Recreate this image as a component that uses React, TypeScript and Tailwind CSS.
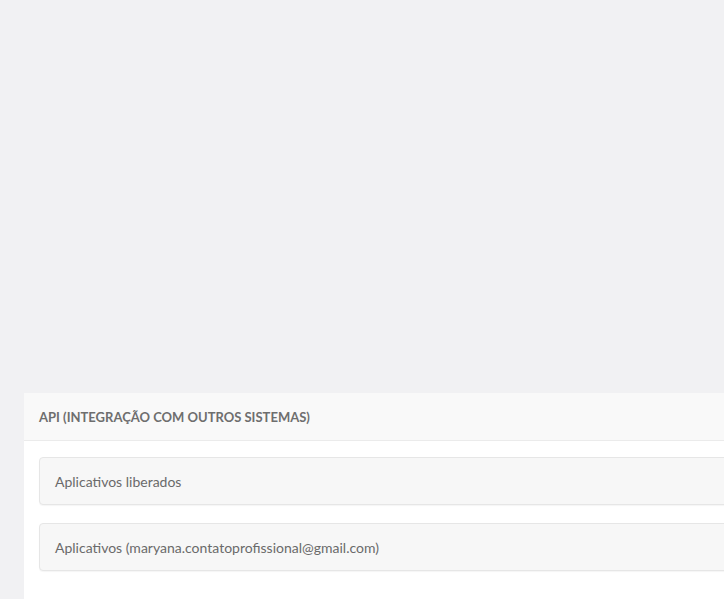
export default function App() {
  return (
    <div
      className="min-h-[599px] h-[599px] w-full overflow-hidden bg-[#f1f1f3] pt-[393px] pl-6"
      style={{ fontFamily: "Lato, 'Open Sans', sans-serif" }}
    >
      <div className="w-[1000px] bg-white">
        <div className="flex h-12 items-center border-b border-[#ebebeb] bg-[#f9f9f9] px-[15px] pt-[3px]">
          <h3 className="text-[13px] font-bold uppercase text-[#6e6e6e]">
            API (Integração com outros sistemas)
          </h3>
        </div>
        <div className="px-[15px] pt-4 pb-8">
          <div className="mb-[18px] flex h-12 items-center rounded-[4px] border border-[#e6e6e6] bg-[#f7f7f7] px-[15px] pt-[1px] shadow-[0_1px_1px_rgba(0,0,0,0.04)]">
            <span className="text-[14px] text-[#6a6a6a]">Aplicativos liberados</span>
          </div>
          <div className="flex h-12 items-center rounded-[4px] border border-[#e6e6e6] bg-[#f7f7f7] px-[15px] pt-[1px] shadow-[0_1px_1px_rgba(0,0,0,0.04)]">
            <span className="text-[14px] text-[#6a6a6a]">
              Aplicativos (maryana.contatoprofissional@gmail.com)
            </span>
          </div>
        </div>
      </div>
    </div>
  );
}
